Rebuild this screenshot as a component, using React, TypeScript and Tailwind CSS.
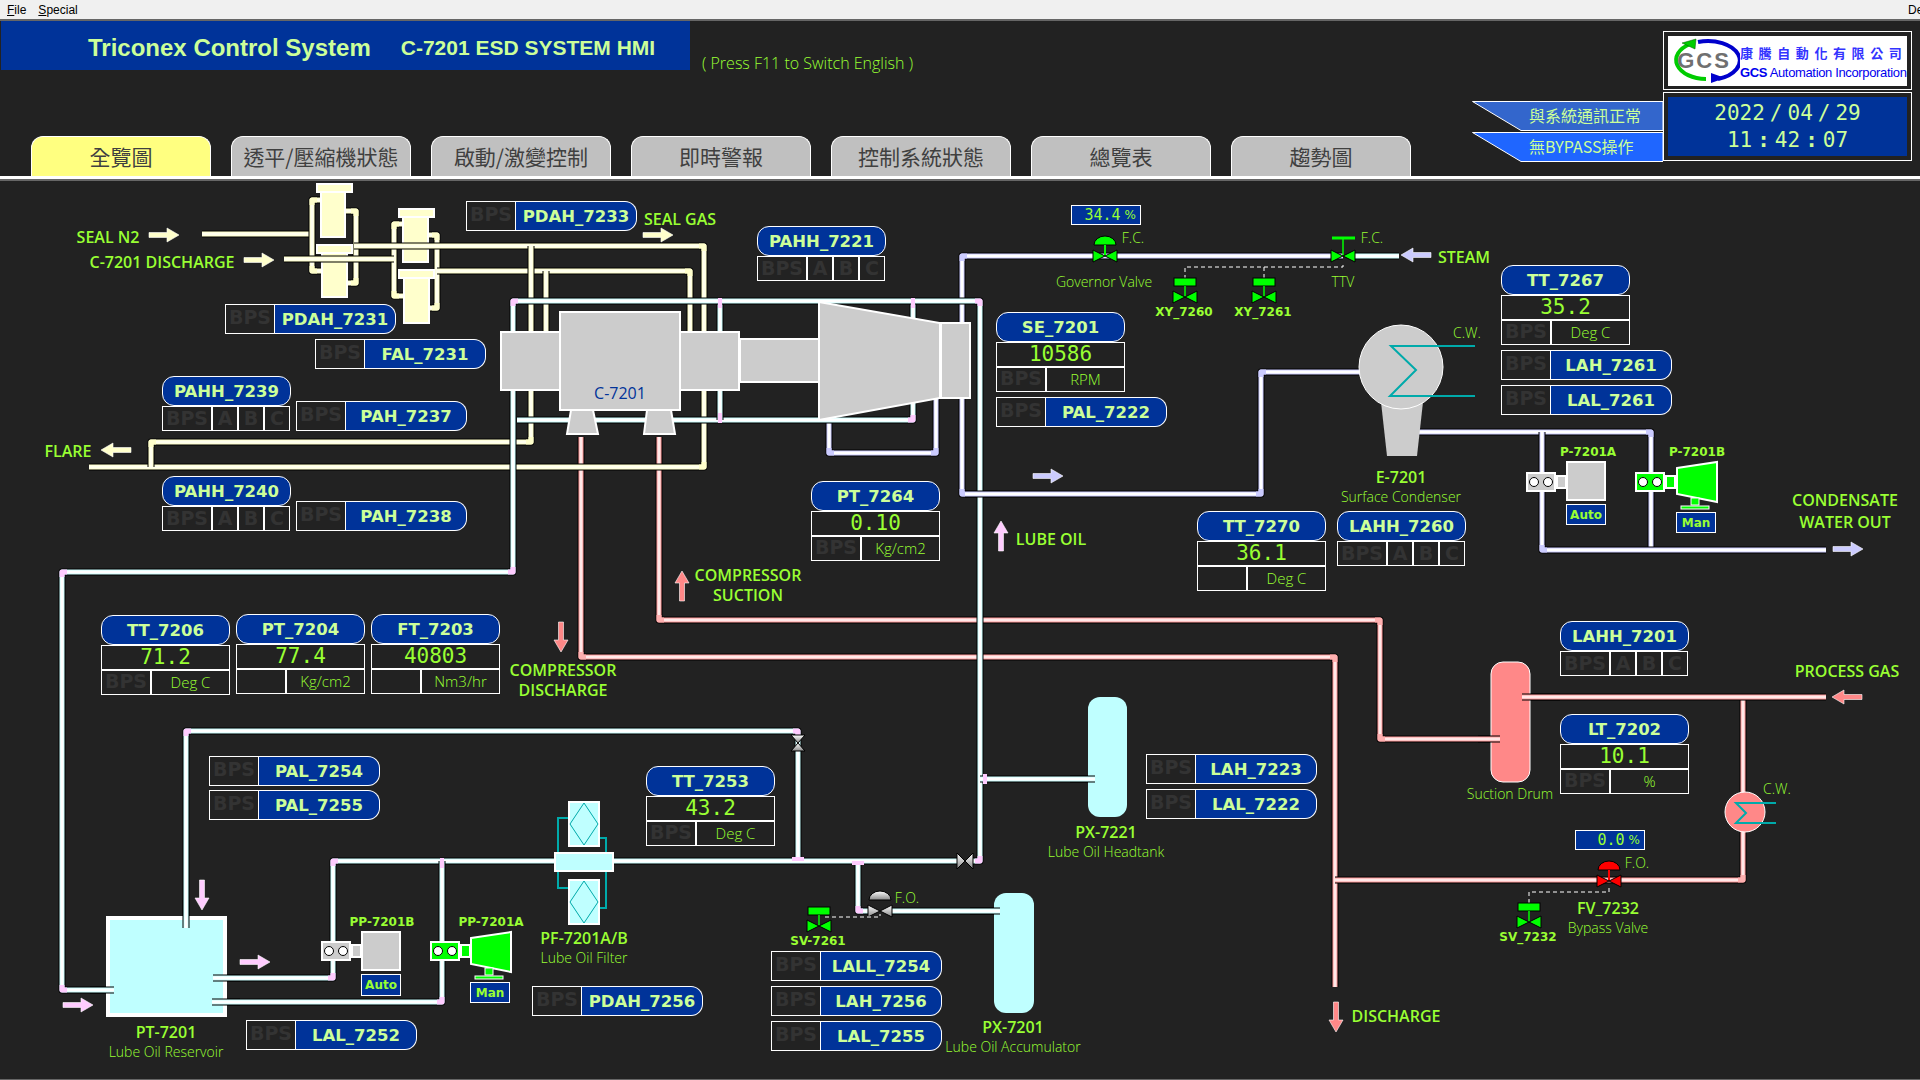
import React from 'react'

type Pt = [number, number]

const PIPE_COLORS = {
  red: { edge: '#ff9999', core: '#ffe8e8', elbow: '#ffb0b0' },
  yellow: { edge: '#ffffcc', core: '#ffffee', elbow: '#ffffcc' },
  cyan: { edge: '#ccffff', core: '#ffffff', elbow: '#ffccff' },
  purple: { edge: '#ccccff', core: '#ffffff', elbow: '#ccccff' },
}

const toPath = (pts: Pt[]) => pts.map((p, i) => `${i ? 'L' : 'M'}${p[0]} ${p[1]}`).join(' ')

// draws one process line: black casing, coloured body, white core, tinted elbows
const Pipe = ({ pts, kind }: { pts: Pt[]; kind: keyof typeof PIPE_COLORS }) => {
  const c = PIPE_COLORS[kind]
  const d = toPath(pts)
  const elbows: string[] = []
  for (let i = 1; i < pts.length - 1; i++) {
    const [a, b, n] = [pts[i - 1], pts[i], pts[i + 1]]
    const step = (from: Pt, to: Pt): Pt => {
      const dx = Math.sign(from[0] - to[0])
      const dy = Math.sign(from[1] - to[1])
      return [to[0] + dx * 5, to[1] + dy * 5]
    }
    elbows.push(toPath([step(a, b), b, step(n, b)]))
  }
  return (
    <g fill="none" strokeLinejoin="round">
      <path d={d} stroke="#000" strokeWidth={7} />
      <path d={d} stroke={c.edge} strokeWidth={5} />
      <path d={d} stroke={c.core} strokeWidth={3} />
      {elbows.map((e, i) => (
        <path key={i} d={e} stroke={c.elbow} strokeWidth={5} />
      ))}
    </g>
  )
}

const Tee = ({ x, y, horizontal }: { x: number; y: number; horizontal?: boolean }) =>
  horizontal ? <rect x={x - 6} y={y - 2} width={12} height={4} fill="#ffccff" /> : <rect x={x - 2} y={y - 5} width={4} height={10} fill="#ffccff" />

const Arrow = ({ x, y, dir, len = 30, color }: { x: number; y: number; dir: 'r' | 'l' | 'u' | 'd'; len?: number; color: string }) => {
  const rot = { r: 0, d: 90, l: 180, u: 270 }[dir]
  return (
    <polygon
      transform={`translate(${x} ${y}) rotate(${rot})`}
      points={`0,-2.5 ${len - 12},-2.5 ${len - 12},-7 ${len},0 ${len - 12},7 ${len - 12},2.5 0,2.5`}
      fill={color}
      stroke="#fff"
      strokeWidth={0.6}
    />
  )
}

const Bowtie = ({ x, y, fill, w = 12, h = 6 }: { x: number; y: number; fill: string; w?: number; h?: number }) => (
  <g stroke="#000" strokeWidth={1}>
    <polygon points={`${x - w},${y - h} ${x - w},${y + h} ${x},${y}`} fill={fill} />
    <polygon points={`${x + w},${y - h} ${x + w},${y + h} ${x},${y}`} fill={fill} />
  </g>
)

const Dome = ({ x, y, fill }: { x: number; y: number; fill: string }) => (
  <g>
    <path d={`M${x - 11} ${y - 11} A11 9 0 0 1 ${x + 11} ${y - 11} Z`} fill={fill} stroke="#000" strokeWidth={1} />
    <line x1={x} y1={y - 11} x2={x} y2={y} stroke={fill} strokeWidth={2} />
    <Bowtie x={x} y={y} fill={fill} />
  </g>
)

const Solenoid = ({ x, y }: { x: number; y: number }) => (
  <g>
    <rect x={x - 11} y={y - 19} width={22} height={8} fill="#00ff00" stroke="#000" strokeWidth={1} />
    <line x1={x} y1={y - 11} x2={x} y2={y} stroke="#00ff00" strokeWidth={1.5} />
    <Bowtie x={x} y={y} fill="#00ff00" />
  </g>
)

const Coupling = ({ x, y, fill }: { x: number; y: number; fill: string }) => (
  <g>
    <rect x={x + 1} y={y + 1} width={28} height={18} fill={fill} stroke="#fff" strokeWidth={2} />
    <circle cx={x + 8} cy={y + 10} r={4.5} fill="#fff" stroke="#000" />
    <circle cx={x + 22} cy={y + 10} r={4.5} fill="#fff" stroke="#000" />
    <rect x={x + 31} y={y + 4} width={9} height={12} fill={fill} stroke="#fff" strokeWidth={2} />
  </g>
)

const PumpMotor = ({ x, y }: { x: number; y: number }) => (
  <g>
    <polygon points={`${x},${y + 6} ${x + 40},${y} ${x + 40},${y + 40} ${x},${y + 32}`} fill="#00ff00" stroke="#fff" strokeWidth={2} />
    <rect x={x + 14} y={y + 36} width={8} height={7} fill="#00ff00" stroke="#fff" />
    <rect x={x + 4} y={y + 44} width={28} height={3} fill="#00ff00" stroke="#fff" />
  </g>
)

const FilterDrum = ({ x1, x2, capX, capY, bodyBottom }: { x1: number; x2: number; capX: number; capY: number; bodyBottom: number }) => (
  <g stroke="#fff" strokeWidth={2} fill="#ffffcc">
    <rect x={x1} y={capY + 8} width={x2 - x1} height={bodyBottom - capY - 8} />
    <rect x={capX} y={capY} width={35} height={8} />
  </g>
)

const Diamond = ({ x, y }: { x: number; y: number }) => (
  <g>
    <rect x={x} y={y} width={30} height={44} fill="#bfffff" stroke="#fff" strokeWidth={2} />
    <polygon points={`${x + 15},${y + 1} ${x + 29},${y + 22} ${x + 15},${y + 43} ${x + 1},${y + 22}`} fill="none" stroke="#00aaaa" strokeWidth={1} />
  </g>
)

const Label = ({ className = '', children }: { className?: string; children: React.ReactNode }) => (
  <div className={`absolute -translate-x-1/2 -translate-y-1/2 whitespace-nowrap text-center text-[#99ff33] ${className}`}>{children}</div>
)

const Name = ({ children, className = '' }: { children: React.ReactNode; className?: string }) => (
  <Label className={`font-semibold text-[16px] leading-[20px] ${className}`}>{children}</Label>
)

const Sub = ({ children, className = '' }: { children: React.ReactNode; className?: string }) => (
  <Label className={`font-light text-[14px] ${className}`}>{children}</Label>
)

const Tiny = ({ children, className = '' }: { children: React.ReactNode; className?: string }) => (
  <Label className={`font-['DejaVu_Sans',sans-serif] font-bold text-[12px] ${className}`}>{children}</Label>
)

// equipment tag with its description beneath
const Caption = ({ name, sub, className }: { name: string; sub: string; className: string }) => (
  <Label className={`flex flex-col items-center leading-[20px] ${className}`}>
    <span className="font-semibold text-[16px]">{name}</span>
    <span className="font-light text-[14px]">{sub}</span>
  </Label>
)

const tagText = "font-['DejaVu_Sans',sans-serif] font-bold text-[16.5px] text-[#ccff99]"
const dimText = "font-['DejaVu_Sans',sans-serif] font-bold text-[19px] leading-none text-[#333333]"

const Pill = ({ name }: { name: string }) => (
  <div className={`flex h-[30px] w-full items-center justify-center rounded-[12px] border border-white bg-[#003399] pt-[2px] ${tagText}`}>{name}</div>
)

const Cell = ({ className = '', children }: { className?: string; children?: React.ReactNode }) => (
  <div className={`flex items-center justify-center border border-white ${className}`}>{children}</div>
)

// BPS square + alarm name
const AlarmTag = ({ name, className = '' }: { name: string; className?: string }) => (
  <div className={`flex h-[30px] w-[171px] ${className}`}>
    <Cell className={`h-full w-[50px] pb-[3px] ${dimText}`}>BPS</Cell>
    <div className={`flex flex-1 items-center justify-center rounded-r-[12px] border border-l-0 border-white bg-[#003399] pt-[2px] ${tagText}`}>{name}</div>
  </div>
)

// alarm name over BPS/A/B/C bypass cells
const VotedTag = ({ name, className }: { name: string; className: string }) => (
  <div className={`absolute flex w-[129px] flex-col ${className}`}>
    <Pill name={name} />
    <div className="flex h-[25px] w-[128px]">
      <Cell className={`h-full w-[50px] ${dimText}`}>BPS</Cell>
      <Cell className={`h-full w-[26px] ${dimText}`}>A</Cell>
      <Cell className={`h-full w-[26px] ${dimText}`}>B</Cell>
      <Cell className={`h-full w-[26px] ${dimText}`}>C</Cell>
    </div>
  </div>
)

// transmitter: name, live value, BPS and unit
const Readout = ({ name, value, unit, bps = true, className = '' }: { name: string; value: string; unit: string; bps?: boolean; className?: string }) => (
  <div className={`flex w-[129px] flex-col ${className}`}>
    <Pill name={name} />
    <Cell className="h-[25px] font-['DejaVu_Sans_Mono',monospace] text-[21px] text-[#99ff33]">{value}</Cell>
    <div className="flex h-[25px]">
      <Cell className={`h-full w-[50px] pb-[2px] ${dimText}`}>{bps ? 'BPS' : ''}</Cell>
      <Cell className="h-full flex-1 font-light text-[15px] text-[#99ff33]">{unit}</Cell>
    </div>
  </div>
)

const Percent = ({ value, className }: { value: string; className: string }) => (
  <div className={`absolute flex h-[20px] w-[70px] items-center justify-end gap-[4px] border border-white bg-[#003399] pr-[4px] text-[#99ff33] ${className}`}>
    <span className="font-['DejaVu_Sans_Mono',monospace] text-[15px]">{value}</span>
    <span className="font-['DejaVu_Sans',sans-serif] text-[12px]">%</span>
  </div>
)

const ModeBox = ({ children, className }: { children: string; className: string }) => (
  <div className={`absolute flex w-[40px] items-center justify-center border border-white bg-[#003399] font-['DejaVu_Sans',sans-serif] text-[12px] font-bold text-[#99ff33] ${className}`}>{children}</div>
)

const TABS = ['全覽圖', '透平/壓縮機狀態', '啟動/激變控制', '即時警報', '控制系統狀態', '總覽表', '趨勢圖']

const StatusFlag = ({ text, fill }: { text: string; fill: string }) => (
  <div className="relative flex h-[30px] w-[191px] items-center pl-[57px] pb-[2px] font-['Noto_Sans_CJK_TC',sans-serif] text-[16px] text-[#ccff99]">
    <svg className="absolute inset-0" width="191" height="30">
      <polygon points="0.5,0.5 191,0.5 191,29.5 49,29.5" fill={fill} stroke="#fff" />
    </svg>
    <span className="relative whitespace-nowrap">{text}</span>
  </div>
)

const Clock = () => (
  <div className="flex h-[59px] w-[239px] flex-col items-center justify-center gap-[5px] bg-[#003399] font-['DejaVu_Sans_Mono',monospace] text-[21px] leading-[22px] text-[#ccff99]">
    <div>
      2022<span className="mx-[5px]">/</span>04<span className="mx-[5px]">/</span>29
    </div>
    <div>
      11<span className="mx-[5px] font-bold">:</span>42<span className="mx-[5px] font-bold">:</span>07
    </div>
  </div>
)

const Logo = () => (
  <div className="flex h-[50px] w-[239px] items-center bg-white">
    <div className="relative flex h-[46px] w-[72px] shrink-0 items-center justify-center">
      <svg className="absolute inset-0" width="72" height="46" viewBox="0 0 72 46">
        <path d="M38 41 A30 19 0 0 1 22 6" fill="none" stroke="#00cc00" strokeWidth="4" />
        <polygon points="14,5 28,1 27,11" fill="#00cc00" stroke="#005500" strokeWidth="0.5" />
        <path d="M30 4 A31 19 0 0 1 50 41" fill="none" stroke="#0000cc" strokeWidth="4" />
        <polygon points="57,40 43,45 43,35" fill="#0000cc" />
      </svg>
      <span className="relative font-['Liberation_Sans',sans-serif] text-[22px] font-bold tracking-[2px] text-[#707070]">GCS</span>
    </div>
    <div className="flex min-w-0 flex-col gap-[4px] whitespace-nowrap pt-[3px]">
      <div className="font-['Noto_Sans_CJK_TC',sans-serif] text-[13px] font-bold leading-[17px] tracking-[5.6px] text-[#3333ff]">康騰自動化有限公司</div>
      <div className="font-['Liberation_Sans',sans-serif] text-[13px] leading-[15px] tracking-[-0.35px] text-[#0000ee]">
        <b>GCS</b> Automation Incorporation
      </div>
    </div>
  </div>
)

const Schematic = () => (
  <svg className="absolute inset-0" width="1920" height="1080">
    <defs>
      <linearGradient id="gray" x1="0" y1="0" x2="0" y2="1">
        <stop offset="0" stopColor="#ffffff" />
        <stop offset="1" stopColor="#888888" />
      </linearGradient>
    </defs>

    {/* process gas */}
    <Pipe kind="red" pts={[[581, 437], [581, 657], [1335, 657], [1335, 987]]} />
    <Pipe kind="red" pts={[[659, 437], [659, 620], [1380, 620], [1380, 739], [1500, 739]]} />
    <Pipe kind="red" pts={[[1335, 880], [1743, 880], [1743, 697]]} />
    <Pipe kind="red" pts={[[1522, 697], [1826, 697]]} />

    {/* seal gas */}
    <Pipe kind="yellow" pts={[[202, 234], [312, 234]]} />
    <Pipe kind="yellow" pts={[[322, 200], [312, 200], [312, 271], [322, 271]]} />
    <Pipe kind="yellow" pts={[[345, 211], [356, 211], [356, 283], [347, 283]]} />
    <Pipe kind="yellow" pts={[[403, 224], [394, 224], [394, 296], [404, 296]]} />
    <Pipe kind="yellow" pts={[[428, 235], [437, 235], [437, 308], [429, 308]]} />
    <FilterDrum x1={321} x2={345} capX={317} capY={184} bodyBottom={237} />
    <FilterDrum x1={322} x2={347} capX={317} capY={245} bodyBottom={297} />
    <FilterDrum x1={403} x2={428} capX={399} capY={209} bodyBottom={262} />
    <FilterDrum x1={404} x2={429} capX={399} capY={270} bodyBottom={323} />
    <Pipe kind="yellow" pts={[[284, 259], [394, 259]]} />
    <Pipe kind="yellow" pts={[[354, 246], [704, 246], [704, 467], [89, 467]]} />
    <Pipe kind="yellow" pts={[[437, 271], [690, 271], [690, 340]]} />
    <Pipe kind="yellow" pts={[[531, 246], [531, 442], [151, 442], [151, 467]]} />
    <Pipe kind="yellow" pts={[[546, 271], [546, 340]]} />

    {/* steam and condensate */}
    <Pipe kind="purple" pts={[[1343, 256], [962, 256], [962, 494], [1261, 494], [1261, 372], [1365, 372]]} />
    <Pipe kind="purple" pts={[[829, 415], [829, 453], [936, 453], [936, 398]]} />
    <Pipe kind="cyan" pts={[[1355, 256], [1399, 256]]} />

    {/* lube oil */}
    <Pipe kind="cyan" pts={[[517, 420], [913, 420], [913, 301]]} />
    <Pipe kind="cyan" pts={[[720, 301], [720, 420]]} />
    <Pipe kind="cyan" pts={[[114, 990], [62, 990], [62, 572], [513, 572], [513, 301], [980, 301], [980, 861], [973, 861]]} />
    <Pipe kind="purple" pts={[[965, 494], [1000, 494]]} />
    <Pipe kind="cyan" pts={[[213, 978], [333, 978], [333, 861], [957, 861]]} />
    <Pipe kind="cyan" pts={[[212, 1002], [442, 1002], [442, 861]]} />
    <Pipe kind="cyan" pts={[[186, 928], [186, 731], [798, 731], [798, 861]]} />
    <Pipe kind="cyan" pts={[[858, 861], [858, 911], [870, 911]]} />
    <Pipe kind="cyan" pts={[[890, 911], [1000, 911]]} />
    <Pipe kind="cyan" pts={[[980, 779], [1095, 779]]} />
    <Tee x={720} y={303} />
    <Tee x={720} y={418} />
    <Tee x={913} y={303} />
    <Tee x={442} y={863} />
    <Tee x={798} y={859} horizontal />
    <Tee x={858} y={863} horizontal />
    <Tee x={985} y={779} />

    <Pipe kind="purple" pts={[[1416, 432], [1651, 432], [1651, 550]]} />
    <Pipe kind="purple" pts={[[1542, 432], [1542, 550], [1826, 550]]} />

    {/* compressor train */}
    <g fill="#cccccc" stroke="#fff" strokeWidth={2}>
      <rect x={501} y={332} width={59} height={58} />
      <rect x={680} y={332} width={59} height={58} />
      <rect x={560} y={312} width={120} height={98} />
      <rect x={740} y={339} width={79} height={43} />
      <polygon points="819,302 940,323 940,398 819,420" />
      <rect x={941} y={323} width={29} height={75} />
      <polygon points="571,410 593,410 598,434 567,434" />
      <polygon points="647,410 671,410 675,434 644,434" />
    </g>

    {/* condenser */}
    <polygon points="1381,402 1423,402 1417,456 1387,456" fill="#cccccc" />
    <ellipse cx={1401} cy={367} rx={42} ry={42} fill="#cccccc" stroke="#fff" strokeWidth={1} />
    <polyline points="1475,346 1391,346 1416,370 1390,396 1475,396" fill="none" stroke="#00aaaa" strokeWidth={2} />

    {/* process gas exchanger and vessels */}
    <circle cx={1745} cy={812} r={20} fill="#ff8888" stroke="#fff" strokeWidth={1} />
    <polyline points="1776,803 1736,803 1746,813 1736,823 1776,823" fill="none" stroke="#00aaaa" strokeWidth={2} />
    <rect x={1491} y={662} width={39} height={120} rx={12} fill="#ff8888" stroke="#fff" strokeWidth={1} />
    <Pipe kind="red" pts={[[1522, 697], [1560, 697]]} />
    <Pipe kind="red" pts={[[1478, 739], [1500, 739]]} />
    <rect x={1088} y={697} width={39} height={120} rx={12} fill="#bfffff" />
    <rect x={994} y={893} width={40} height={120} rx={12} fill="#bfffff" />
    <Pipe kind="cyan" pts={[[1070, 779], [1095, 779]]} />
    <Pipe kind="cyan" pts={[[970, 911], [1000, 911]]} />
    <rect x={108} y={918} width={117} height={97} fill="#bfffff" stroke="#fff" strokeWidth={4} />
    <Pipe kind="cyan" pts={[[186, 900], [186, 928]]} />
    <Pipe kind="cyan" pts={[[213, 978], [240, 978]]} />
    <Pipe kind="cyan" pts={[[212, 1002], [240, 1002]]} />
    <Pipe kind="cyan" pts={[[90, 990], [114, 990]]} />

    {/* lube oil filter */}
    <g fill="none" stroke="#00aaaa" strokeWidth={2}>
      <polyline points="569,818 558,818 558,854" />
      <polyline points="599,838 606,838 606,854" />
      <polyline points="569,888 558,888 558,870" />
      <polyline points="599,908 606,908 606,870" />
    </g>
    <Diamond x={569} y={802} />
    <Diamond x={569} y={880} />
    <rect x={555} y={853} width={58} height={18} fill="#bfffff" stroke="#fff" strokeWidth={2} />

    {/* pumps */}
    <Coupling x={321} y={941} fill="#cccccc" />
    <rect x={362} y={932} width={38} height={38} fill="#cccccc" stroke="#fff" strokeWidth={2} />
    <Coupling x={430} y={941} fill="#00ff00" />
    <PumpMotor x={471} y={932} />
    <Coupling x={1526} y={472} fill="#cccccc" />
    <rect x={1567} y={462} width={38} height={38} fill="#cccccc" stroke="#fff" strokeWidth={2} />
    <Coupling x={1635} y={472} fill="#00ff00" />
    <PumpMotor x={1677} y={462} />

    {/* valves */}
    <Dome x={1105} y={256} fill="#00ff00" />
    <line x1={1332} y1={238} x2={1355} y2={238} stroke="#00ff00" strokeWidth={3} />
    <line x1={1343} y1={238} x2={1343} y2={256} stroke="#00ff00" strokeWidth={1.5} />
    <Bowtie x={1343} y={256} fill="#00ff00" />
    <Dome x={1609} y={881} fill="#ff0000" />
    <Dome x={880} y={911} fill="url(#gray)" />
    <Bowtie x={965} y={861} fill="url(#gray)" w={8} h={8} />
    <g stroke="#000" fill="url(#gray)">
      <polygon points="791,735 805,735 798,743" />
      <polygon points="791,751 805,751 798,743" />
    </g>
    <g fill="none" stroke="#fff" strokeDasharray="4 3">
      <polyline points="1185,279 1185,267 1343,267 1343,262" />
      <line x1={1264} y1={267} x2={1264} y2={279} />
      <polyline points="1529,903 1529,892 1609,892 1609,887" />
      <polyline points="825,917 880,917 880,914" />
    </g>
    <Solenoid x={1185} y={297} />
    <Solenoid x={1264} y={297} />
    <Solenoid x={1529} y={922} />
    <Solenoid x={819} y={926} />

    {/* flow arrows */}
    <Arrow x={149} y={235} dir="r" color="#ffffcc" />
    <Arrow x={244} y={260} dir="r" color="#ffffcc" />
    <Arrow x={131} y={450} dir="l" color="#ffffcc" />
    <Arrow x={643} y={235} dir="r" color="#ffffcc" />
    <Arrow x={1431} y={255} dir="l" color="#ccccff" />
    <Arrow x={1033} y={476} dir="r" color="#ccccff" />
    <Arrow x={1833} y={549} dir="r" color="#ccccff" />
    <Arrow x={1001} y={551} dir="u" color="#ffccff" />
    <Arrow x={240} y={962} dir="r" color="#ffccff" />
    <Arrow x={63} y={1005} dir="r" color="#ffccff" />
    <Arrow x={202} y={880} dir="d" color="#ffccff" />
    <Arrow x={682} y={601} dir="u" color="#ff8888" />
    <Arrow x={561} y={622} dir="d" color="#ff8888" />
    <Arrow x={1336} y={1002} dir="d" color="#ff8888" />
    <Arrow x={1862} y={697} dir="l" color="#ff8888" />
  </svg>
)

export default function App() {
  return (
    <div className="relative flex h-[1080px] w-[1920px] flex-col overflow-hidden bg-[#222222] font-['Open_Sans',sans-serif]">
      <div className="flex h-[19px] items-center justify-between bg-[#f0f0f0] pl-[7px] font-['Liberation_Sans',sans-serif] text-[12px] text-black">
        <div className="flex gap-[12px]">
          <span><u>F</u>ile</span>
          <span><u>S</u>pecial</span>
        </div>
        <span className="w-[12px] overflow-hidden">De</span>
      </div>
      <div className="h-[2px] bg-[#666666]" />

      <div className="flex h-[155px]">
        <div className="flex flex-1 flex-col pl-[1px]">
          <div className="flex h-[49px] items-start">
            <div className="flex h-[49px] w-[689px] items-center gap-[30px] bg-[#003399] pl-[87px] pt-[4px] font-['Liberation_Sans',sans-serif] font-bold text-[#ccff99]">
              <span className="text-[24px]">Triconex Control System</span>
              <span className="text-[21px]">C-7201 ESD SYSTEM HMI</span>
            </div>
            <span className="ml-[12px] mt-[30px] text-[16px] font-light leading-[24px] text-[#99ff33]">( Press F11 to Switch English )</span>
          </div>
          <div className="mt-auto flex gap-[20px] pl-[30px]">
            {TABS.map((t, i) => (
              <div
                key={t}
                className={`flex h-[40px] w-[180px] items-center justify-center rounded-t-[12px] border border-b-0 border-white font-['Noto_Sans_CJK_TC',sans-serif] text-[21px] text-[#404040] ${i === 0 ? 'bg-[#ffff80]' : 'bg-[#c0c0c0]'}`}
              >
                {t}
              </div>
            ))}
          </div>
        </div>
        <div className="flex items-start pr-[8px]">
          <div className="mt-[80px] flex flex-col gap-[1px]">
            <StatusFlag text="與系統通訊正常" fill="#3366cc" />
            <StatusFlag text="無BYPASS操作" fill="#1f66ff" />
          </div>
          <div className="mt-[10px] flex flex-col gap-[2px]">
            <div className="flex h-[59px] w-[249px] items-center justify-center border border-white"><Logo /></div>
            <div className="flex h-[69px] w-[249px] items-center justify-center border border-white"><Clock /></div>
          </div>
        </div>
      </div>
      <div className="h-[3px] bg-white" />
      <div className="h-[2px] bg-[#666666]" />

      {/* free canvas in page coordinates */}
      <div className="absolute left-0 top-0 h-[1080px] w-[1920px] pointer-events-none">
        <Schematic />

        <Label className="left-[620px] top-[393px] text-[16px] font-normal !text-[#003399]">C-7201</Label>

        <AlarmTag name="PDAH_7233" className="absolute left-[466px] top-[201px]" />
        <AlarmTag name="PDAH_7231" className="absolute left-[225px] top-[304px]" />
        <AlarmTag name="FAL_7231" className="absolute left-[315px] top-[339px]" />
        <AlarmTag name="PAH_7237" className="absolute left-[296px] top-[401px]" />
        <AlarmTag name="PAH_7238" className="absolute left-[296px] top-[501px]" />
        <AlarmTag name="PAL_7222" className="absolute left-[996px] top-[397px]" />
        <AlarmTag name="LAL_7252" className="absolute left-[246px] top-[1020px]" />
        <AlarmTag name="PDAH_7256" className="absolute left-[532px] top-[986px]" />
        <div className="absolute left-[1501px] top-[350px] flex flex-col gap-[5px]">
          <AlarmTag name="LAH_7261" />
          <AlarmTag name="LAL_7261" />
        </div>
        <div className="absolute left-[209px] top-[756px] flex flex-col gap-[4px]">
          <AlarmTag name="PAL_7254" />
          <AlarmTag name="PAL_7255" />
        </div>
        <div className="absolute left-[771px] top-[951px] flex flex-col gap-[5px]">
          <AlarmTag name="LALL_7254" />
          <AlarmTag name="LAH_7256" />
          <AlarmTag name="LAL_7255" />
        </div>
        <div className="absolute left-[1146px] top-[754px] flex flex-col gap-[5px]">
          <AlarmTag name="LAH_7223" />
          <AlarmTag name="LAL_7222" />
        </div>

        <VotedTag name="PAHH_7239" className="left-[162px] top-[376px]" />
        <VotedTag name="PAHH_7240" className="left-[162px] top-[476px]" />
        <VotedTag name="PAHH_7221" className="left-[757px] top-[226px]" />
        <VotedTag name="LAHH_7260" className="left-[1337px] top-[511px]" />
        <VotedTag name="LAHH_7201" className="left-[1560px] top-[621px]" />

        <Readout name="SE_7201" value="10586" unit="RPM" className="absolute left-[996px] top-[312px]" />
        <Readout name="PT_7264" value="0.10" unit="Kg/cm2" className="absolute left-[811px] top-[481px]" />
        <Readout name="TT_7267" value="35.2" unit="Deg C" className="absolute left-[1501px] top-[265px]" />
        <Readout name="TT_7270" value="36.1" unit="Deg C" bps={false} className="absolute left-[1197px] top-[511px]" />
        <Readout name="LT_7202" value="10.1" unit="%" className="absolute left-[1560px] top-[714px]" />
        <Readout name="TT_7253" value="43.2" unit="Deg C" className="absolute left-[646px] top-[766px]" />
        <div className="absolute left-[101px] top-[614px] flex items-start gap-[6px]">
          <Readout name="TT_7206" value="71.2" unit="Deg C" className="mt-px" />
          <Readout name="PT_7204" value="77.4" unit="Kg/cm2" bps={false} />
          <Readout name="FT_7203" value="40803" unit="Nm3/hr" bps={false} />
        </div>

        <Percent value="34.4" className="left-[1071px] top-[205px]" />
        <Percent value="0.0" className="left-[1575px] top-[830px]" />

        <ModeBox className="left-[1566px] top-[504px] h-[21px]">Auto</ModeBox>
        <ModeBox className="left-[1676px] top-[512px] h-[21px]">Man</ModeBox>
        <ModeBox className="left-[361px] top-[974px] h-[22px]">Auto</ModeBox>
        <ModeBox className="left-[470px] top-[982px] h-[21px]">Man</ModeBox>

        <Name className="left-[108px] top-[237px]">SEAL N2</Name>
        <Name className="left-[162px] top-[262px]">C-7201 DISCHARGE</Name>
        <Name className="left-[68px] top-[451px]">FLARE</Name>
        <Name className="left-[680px] top-[219px]">SEAL GAS</Name>
        <Name className="left-[1051px] top-[539px]">LUBE OIL</Name>
        <Name className="left-[1464px] top-[257px]">STEAM</Name>
        <Name className="left-[748px] top-[585px]">COMPRESSOR<br />SUCTION</Name>
        <Name className="left-[563px] top-[680px]">COMPRESSOR<br />DISCHARGE</Name>
        <Name className="left-[1845px] top-[511px] !leading-[22px]">CONDENSATE<br />WATER OUT</Name>
        <Name className="left-[1847px] top-[671px]">PROCESS GAS</Name>
        <Name className="left-[1396px] top-[1016px]">DISCHARGE</Name>

        <Caption name="E-7201" sub="Surface Condenser" className="left-[1401px] top-[487px]" />
        <Caption name="PT-7201" sub="Lube Oil Reservoir" className="left-[166px] top-[1042px]" />
        <Caption name="PF-7201A/B" sub="Lube Oil Filter" className="left-[584px] top-[948px]" />
        <Caption name="PX-7221" sub="Lube Oil Headtank" className="left-[1106px] top-[842px]" />
        <Caption name="PX-7201" sub="Lube Oil Accumulator" className="left-[1013px] top-[1037px]" />
        <Caption name="FV_7232" sub="Bypass Valve" className="left-[1608px] top-[918px]" />
        <Sub className="left-[1510px] top-[793px]">Suction Drum</Sub>
        <Sub className="left-[1104px] top-[281px]">Governor Valve</Sub>
        <Sub className="left-[1343px] top-[281px]">TTV</Sub>
        <Sub className="left-[1133px] top-[237px]">F.C.</Sub>
        <Sub className="left-[1372px] top-[237px]">F.C.</Sub>
        <Sub className="left-[1467px] top-[332px]">C.W.</Sub>
        <Sub className="left-[1777px] top-[788px]">C.W.</Sub>
        <Sub className="left-[907px] top-[897px]">F.O.</Sub>
        <Sub className="left-[1637px] top-[862px]">F.O.</Sub>

        <Tiny className="left-[1184px] top-[312px]">XY_7260</Tiny>
        <Tiny className="left-[1263px] top-[312px]">XY_7261</Tiny>
        <Tiny className="left-[818px] top-[941px]">SV-7261</Tiny>
        <Tiny className="left-[1528px] top-[937px]">SV_7232</Tiny>
        <Tiny className="left-[1588px] top-[452px]">P-7201A</Tiny>
        <Tiny className="left-[1697px] top-[452px]">P-7201B</Tiny>
        <Tiny className="left-[382px] top-[922px]">PP-7201B</Tiny>
        <Tiny className="left-[491px] top-[922px]">PP-7201A</Tiny>
      </div>
      <div className="absolute bottom-0 left-0 h-px w-full bg-[#666666]" />
    </div>
  )
}
